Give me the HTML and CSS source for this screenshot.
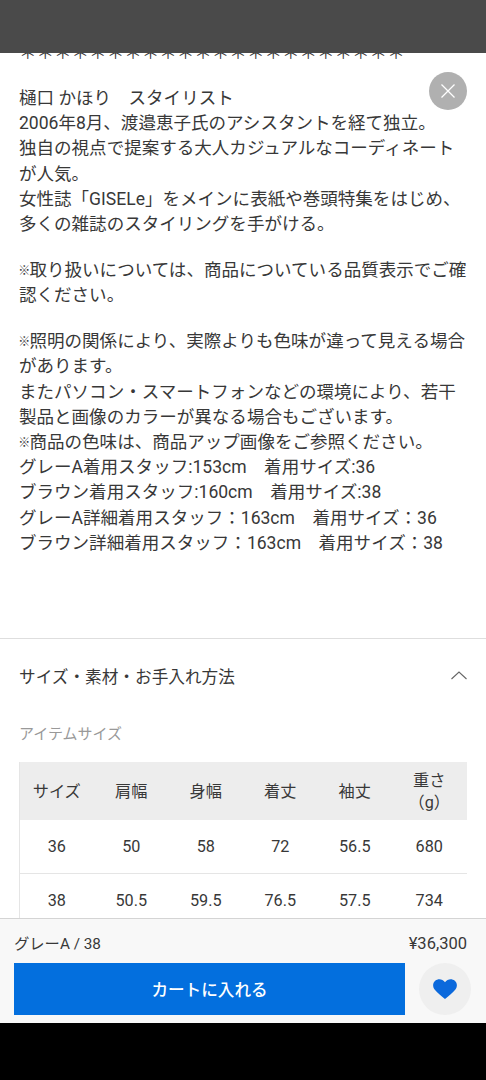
FILE: index.html
```html
<!DOCTYPE html>
<html lang="ja">
<head>
<meta charset="utf-8">
<title>商品詳細</title>
<link rel="stylesheet" href="styles.css">
</head>
<body>
<div class="screen">
  <div class="status"></div>
  <main class="sheet">
    <button class="close" aria-label="閉じる"><svg width="38" height="38" viewBox="0 0 38 38"><path d="M12.5 12.5 25.5 25.5M25.5 12.5 12.5 25.5" fill="none" stroke="#fff" stroke-width="1.3"/></svg></button>
    <section class="desc">
      <p class="rule">＊＊＊＊＊＊＊＊＊＊＊＊＊＊＊＊＊＊＊＊＊＊</p>
      <p>樋口 かほり　スタイリスト<br>2006年8月、渡邉恵子氏のアシスタントを経て独立。<br>独自の視点で提案する大人カジュアルなコーディネート<br>が人気。<br>女性誌「GISELe」をメインに表紙や巻頭特集をはじめ、<br>多くの雑誌のスタイリングを手がける。</p>
      <p><span class="note">※</span>取り扱いについては、商品についている品質表示でご確<br>認ください。</p>
      <p><span class="note">※</span>照明の関係により、実際よりも色味が違って見える場合<br>があります。<br>またパソコン・スマートフォンなどの環境により、若干<br>製品と画像のカラーが異なる場合もございます。<br><span class="note">※</span>商品の色味は、商品アップ画像をご参照ください。<br>グレーA着用スタッフ:153cm　着用サイズ:36<br>ブラウン着用スタッフ:160cm　着用サイズ:38<br>グレーA詳細着用スタッフ：163cm　着用サイズ：36<br>ブラウン詳細着用スタッフ：163cm　着用サイズ：38</p>
    </section>
    <section class="spec">
      <h2 class="spec-head">サイズ・素材・お手入れ方法<svg width="17" height="10" viewBox="0 0 17 10"><path d="M1.5 8 9 1 16.5 8" fill="none" stroke="#666" stroke-width="1.1"/></svg></h2>
      <h3 class="spec-sub">アイテムサイズ</h3>
      <table class="sizes">
        <thead><tr><th>サイズ</th><th>肩幅</th><th>身幅</th><th>着丈</th><th>袖丈</th><th>重さ<br>（g）</th></tr></thead>
        <tbody>
          <tr><td>36</td><td>50</td><td>58</td><td>72</td><td>56.5</td><td>680</td></tr>
          <tr><td>38</td><td>50.5</td><td>59.5</td><td>76.5</td><td>57.5</td><td>734</td></tr>
        </tbody>
      </table>
    </section>
  </main>
  <footer class="buy">
    <div class="summary"><span class="variant">グレーA / 38</span><span class="price">¥36,300</span></div>
    <div class="actions">
      <button class="cart">カートに入れる</button>
      <button class="fav" aria-label="お気に入り"><svg width="24" height="20" viewBox="0 0 24 20"><path d="M12 20C8.5 17.2 3.8 13.3 1.6 10.6C-.6 7.8-.3 3.7 2.2 1.7C5.2-.8 9.6-.2 12 3.2C14.4-.2 18.8-.8 21.8 1.7C24.3 3.7 24.6 7.8 22.4 10.6C20.2 13.3 15.5 17.2 12 20Z" fill="#0b69dc"/></svg></button>
    </div>
  </footer>
  <div class="navbar"></div>
</div>
</body>
</html>
```

FILE: styles.css
```css
* { box-sizing: border-box; }
body { margin: 0; background: #000; color: #383838; font-family: Roboto, "Noto Sans CJK JP", sans-serif; }
button { border: 0; padding: 0; font-family: inherit; }
.screen { display: flex; flex-direction: column; width: 486px; height: 1080px; overflow: hidden; }
.status { flex: none; height: 53px; background: #4a4a4a; }
.sheet { position: relative; flex: none; height: 865px; overflow: hidden; background: #fff; }
.close { position: absolute; top: 19px; right: 19px; width: 38px; height: 38px; border-radius: 50%; background: #b0b0b0; }
.close svg { display: block; }

.desc { height: 598px; margin-top: -13px; padding-left: 19px; font-size: 17.55px; line-height: 25.2px; white-space: nowrap; }
.desc p { margin: 0 0 20.8px; }
.desc .rule { padding-top: 1px; margin-bottom: 19.8px; }
.note { display: inline-block; width: 10.5px; font-size: 12px; font-weight: 500; line-height: 1; vertical-align: 1px; text-indent: -.7px; }

.spec { padding: 0 19px; border-top: 1px solid #dedede; }
.spec-head { display: flex; justify-content: space-between; align-items: center; height: 74px; margin: 0; font-size: 16.65px; font-weight: 400; }
.spec-sub { height: 49px; margin: 0; padding-top: 9px; font-size: 15px; line-height: 24px; font-weight: 400; color: #999; }
.sizes { width: 448px; table-layout: fixed; border-collapse: separate; border-spacing: 0; border-left: 1px solid #e5e5e5; font-size: 16.2px; line-height: 22px; text-align: center; }
.sizes th { height: 58px; padding: 1px 1px 0 0; background: #ededed; font-weight: 400; }
.sizes td { height: 53.5px; padding: 2px 1px 0 0; border-bottom: 1px solid #e5e5e5; }

.buy { flex: none; height: 105px; padding: 0 14px; border-top: 1px solid #d4d4d4; background: #f8f8f8; }
.summary { display: flex; justify-content: space-between; align-items: center; height: 44px; padding: 4px 5px 0 0; font-size: 15.3px; }
.variant { margin-top: -2px; }
.price { font-size: 16.5px; }
.actions { display: flex; gap: 14px; }
.cart { width: 391px; height: 52px; background: #036fde; color: #fff; font-size: 16.6px; font-weight: 500; }
.fav { display: grid; place-items: center; width: 52px; height: 52px; border-radius: 50%; background: #efefef; }
.navbar { flex: 1; background: #000; }
```
